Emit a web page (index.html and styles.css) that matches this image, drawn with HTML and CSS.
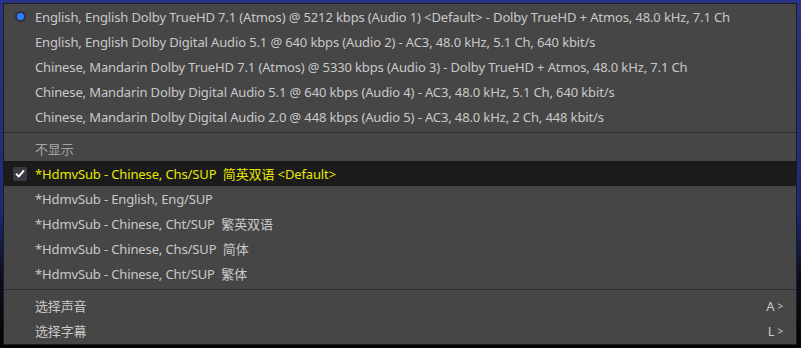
FILE: index.html
```html
<!DOCTYPE html>
<html>
<head>
<meta charset="utf-8">
<link rel="stylesheet" href="styles.css">
</head>
<body>
<div class="stage">
  <div class="menu">
    <div class="item"><span class="mark"><span class="radio"></span></span><span class="label">English, English Dolby TrueHD 7.1 (Atmos) @ 5212 kbps (Audio 1) &lt;Default&gt; - Dolby TrueHD + Atmos, 48.0 kHz, 7.1 Ch</span></div>
    <div class="item"><span class="mark"></span><span class="label">English, English Dolby Digital Audio 5.1 @ 640 kbps (Audio 2) - AC3, 48.0 kHz, 5.1 Ch, 640 kbit/s</span></div>
    <div class="item"><span class="mark"></span><span class="label">Chinese, Mandarin Dolby TrueHD 7.1 (Atmos) @ 5330 kbps (Audio 3) - Dolby TrueHD + Atmos, 48.0 kHz, 7.1 Ch</span></div>
    <div class="item"><span class="mark"></span><span class="label">Chinese, Mandarin Dolby Digital Audio 5.1 @ 640 kbps (Audio 4) - AC3, 48.0 kHz, 5.1 Ch, 640 kbit/s</span></div>
    <div class="item"><span class="mark"></span><span class="label">Chinese, Mandarin Dolby Digital Audio 2.0 @ 448 kbps (Audio 5) - AC3, 48.0 kHz, 2 Ch, 448 kbit/s</span></div>
    <div class="sep"></div>
    <div class="item dim"><span class="mark"></span><span class="label">不显示</span></div>
    <div class="item active"><span class="mark"><span class="check"><svg width="10" height="9" viewBox="0 0 10 9"><path d="M1 4.8 L3.8 7.4 L9 1.4" fill="none" stroke="#ffffff" stroke-width="2"/></svg></span></span><span class="label">*HdmvSub - Chinese, Chs/SUP&nbsp; 简英双语 &lt;Default&gt;</span></div>
    <div class="item"><span class="mark"></span><span class="label">*HdmvSub - English, Eng/SUP</span></div>
    <div class="item"><span class="mark"></span><span class="label">*HdmvSub - Chinese, Cht/SUP&nbsp; 繁英双语</span></div>
    <div class="item"><span class="mark"></span><span class="label">*HdmvSub - Chinese, Chs/SUP&nbsp; 简体</span></div>
    <div class="item"><span class="mark"></span><span class="label">*HdmvSub - Chinese, Cht/SUP&nbsp; 繁体</span></div>
    <div class="sep"></div>
    <div class="item"><span class="mark"></span><span class="label">选择声音</span><span class="key">A<span class="arrow">&gt;</span></span></div>
    <div class="item"><span class="mark"></span><span class="label">选择字幕</span><span class="key">L<span class="arrow">&gt;</span></span></div>
  </div>
</div>
</body>
</html>
```

FILE: styles.css
```css
html, body {
  margin: 0;
  padding: 0;
}
body {
  width: 801px;
  height: 348px;
  overflow: hidden;
  background: linear-gradient(180deg, #2a3486 0%, #1e2a78 60%, #0a0d1e 80%, #050505 100%);
  font-family: "Noto Sans", "Noto Sans CJK SC", sans-serif;
}
.stage {
  padding: 3px 4px 3px 3px;
}
.menu {
  width: 792px;
  height: 340px;
  border: 1px solid #1c1c1c;
  background: #464646;
  display: flex;
  flex-direction: column;
}
.item {
  height: 25px;
  flex: none;
  display: flex;
  align-items: center;
  font-size: 13px;
  letter-spacing: -0.13px;
  color: #c9c9c9;
  white-space: nowrap;
}
.item.dim {
  color: #a6a6a6;
}
.item.active {
  background: #1b1b1b;
  color: #e8e800;
}
.mark {
  width: 31px;
  height: 25px;
  display: flex;
  align-items: center;
  justify-content: center;
  flex: none;
  padding-left: 1px;
  box-sizing: border-box;
}
.radio {
  width: 7px;
  height: 7px;
  border-radius: 50%;
  background: #2a80ff;
  border: 2px solid #2f323c;
}
.check {
  width: 14px;
  height: 14px;
  border-radius: 2px;
  background: #3b3b46;
  display: flex;
  align-items: center;
  justify-content: center;
}
.label {
  flex: 1;
}
.key {
  padding-right: 13px;
  display: flex;
  align-items: center;
  gap: 3px;
}
.arrow {
  font-size: 10px;
}
.sep {
  height: 7px;
  flex: none;
  display: flex;
  align-items: center;
}
.sep::before {
  content: "";
  display: block;
  width: 100%;
  height: 1px;
  background: #2d2d33;
}
```
